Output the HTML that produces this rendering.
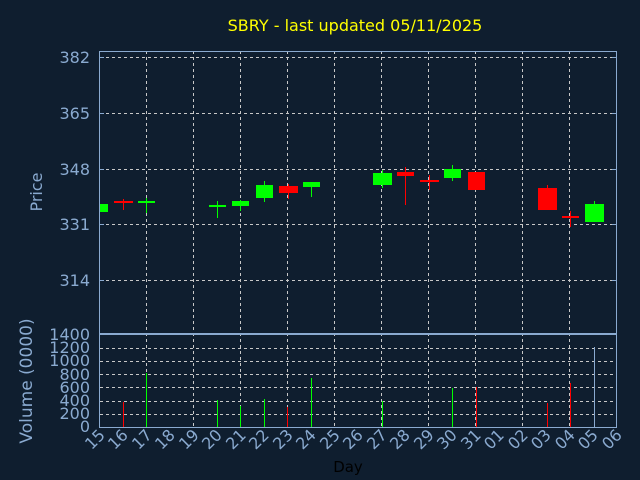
<html><head><style>body{margin:0;background:#0f1e2f}</style></head><body>
<svg width="640" height="480" xmlns="http://www.w3.org/2000/svg" font-family="DejaVu Sans, sans-serif">
<rect width="640" height="480" fill="#0f1e2f"/>
<text x="355" y="31" fill="#ffff00" font-size="16" text-anchor="middle">SBRY - last updated 05/11/2025</text>
<g stroke="#c8c8c8" stroke-dasharray="3,3" stroke-width="1" shape-rendering="crispEdges">
<line x1="100" y1="57.5" x2="617" y2="57.5"/><line x1="100" y1="113.5" x2="617" y2="113.5"/><line x1="100" y1="169.5" x2="617" y2="169.5"/><line x1="100" y1="224.5" x2="617" y2="224.5"/><line x1="100" y1="280.5" x2="617" y2="280.5"/>
<line x1="100" y1="348.5" x2="617" y2="348.5"/><line x1="100" y1="361.5" x2="617" y2="361.5"/><line x1="100" y1="374.5" x2="617" y2="374.5"/><line x1="100" y1="387.5" x2="617" y2="387.5"/><line x1="100" y1="401.5" x2="617" y2="401.5"/><line x1="100" y1="414.5" x2="617" y2="414.5"/>
<path d="M146.5 51V427M193.5 51V427M240.5 51V427M287.5 51V427M334.5 51V427M381.5 51V427M428.5 51V427M475.5 51V427M522.5 51V427M569.5 51V427"/>
</g>
<g fill="none" stroke="#8aaad0" stroke-width="1" shape-rendering="crispEdges">
<rect x="99.5" y="51.5" width="517" height="282"/>
<rect x="99.5" y="334.5" width="517" height="93"/>
<path d="M99 57.5h5M99 113.5h5M99 169.5h5M99 224.5h5M99 280.5h5M612 57.5h5M612 113.5h5M612 169.5h5M612 224.5h5M612 280.5h5"/>
</g>
<g fill="#8aaad0" font-size="16" text-anchor="end">
<text x="90" y="63">382</text><text x="90" y="119">365</text><text x="90" y="175">348</text><text x="90" y="230">331</text><text x="90" y="286">314</text>
<text x="90" y="340">1400</text><text x="90" y="353">1200</text><text x="90" y="366">1000</text><text x="90" y="380">800</text><text x="90" y="393">600</text><text x="90" y="406">400</text><text x="90" y="419">200</text><text x="90" y="432">0</text>
</g>
<text transform="translate(42,192) rotate(-90)" fill="#8aaad0" font-size="16" text-anchor="middle">Price</text>
<text transform="translate(32,381) rotate(-90)" fill="#8aaad0" font-size="17" text-anchor="middle">Volume (0000)</text>
<g fill="#8aaad0" font-size="16" text-anchor="end">
<text transform="translate(106,436) rotate(-45)">15</text><text transform="translate(129,436) rotate(-45)">16</text><text transform="translate(153,436) rotate(-45)">17</text><text transform="translate(176,436) rotate(-45)">18</text><text transform="translate(200,436) rotate(-45)">19</text><text transform="translate(223,436) rotate(-45)">20</text><text transform="translate(247,436) rotate(-45)">21</text><text transform="translate(270,436) rotate(-45)">22</text><text transform="translate(294,436) rotate(-45)">23</text><text transform="translate(317,436) rotate(-45)">24</text><text transform="translate(341,436) rotate(-45)">25</text><text transform="translate(364,436) rotate(-45)">26</text><text transform="translate(388,436) rotate(-45)">27</text><text transform="translate(411,436) rotate(-45)">28</text><text transform="translate(435,436) rotate(-45)">29</text><text transform="translate(458,436) rotate(-45)">30</text><text transform="translate(482,436) rotate(-45)">31</text><text transform="translate(505,436) rotate(-45)">01</text><text transform="translate(529,436) rotate(-45)">02</text><text transform="translate(552,436) rotate(-45)">03</text><text transform="translate(576,436) rotate(-45)">04</text><text transform="translate(599,436) rotate(-45)">05</text><text transform="translate(623,436) rotate(-45)">06</text>
</g>
<text x="348" y="472" fill="#000" font-size="15" text-anchor="middle">Day</text>
<g fill="#00ff00">
<rect x="146" y="198" width="1" height="15"/><rect x="217" y="201" width="1" height="17"/><rect x="240" y="200" width="1" height="11"/><rect x="264" y="181" width="1" height="21"/><rect x="311" y="182" width="1" height="15"/><rect x="382" y="170" width="1" height="18"/><rect x="452" y="165" width="1" height="16"/><rect x="594" y="201" width="1" height="21"/>
<rect x="146" y="373" width="1" height="54"/><rect x="217" y="400" width="1" height="27"/><rect x="240" y="406" width="1" height="21"/><rect x="264" y="399" width="1" height="28"/><rect x="311" y="378" width="1" height="49"/><rect x="382" y="401" width="1" height="26"/><rect x="452" y="388" width="1" height="39"/>
</g>
<g fill="#ff0000">
<rect x="123" y="199" width="1" height="11"/><rect x="288" y="184" width="1" height="15"/><rect x="405" y="167" width="1" height="38"/><rect x="429" y="175" width="1" height="15"/><rect x="547" y="185" width="1" height="25"/><rect x="570" y="211" width="1" height="16"/>
<rect x="123" y="402" width="1" height="25"/><rect x="287" y="407" width="1" height="20"/><rect x="476" y="387" width="1" height="40"/><rect x="547" y="403" width="1" height="24"/><rect x="570" y="383" width="1" height="44"/>
</g>
<rect x="594" y="347" width="1" height="80" fill="#8aaad0"/>
<g fill="#00ff00"><rect x="100" y="204" width="8" height="8"/><rect x="138" y="201" width="17" height="2"/><rect x="209" y="205" width="17" height="2"/><rect x="232" y="201" width="17" height="5"/><rect x="256" y="185" width="17" height="13"/><rect x="303" y="182" width="17" height="5"/><rect x="373" y="173" width="19" height="12"/><rect x="444" y="169" width="17" height="9"/><rect x="585" y="204" width="19" height="18"/></g>
<g fill="#ff0000"><rect x="114" y="201" width="19" height="2"/><rect x="279" y="186" width="19" height="7"/><rect x="397" y="172" width="17" height="4"/><rect x="420" y="180" width="19" height="2"/><rect x="468" y="172" width="17" height="18"/><rect x="538" y="188" width="19" height="22"/><rect x="562" y="216" width="17" height="2"/></g>
</svg>
</body></html>
